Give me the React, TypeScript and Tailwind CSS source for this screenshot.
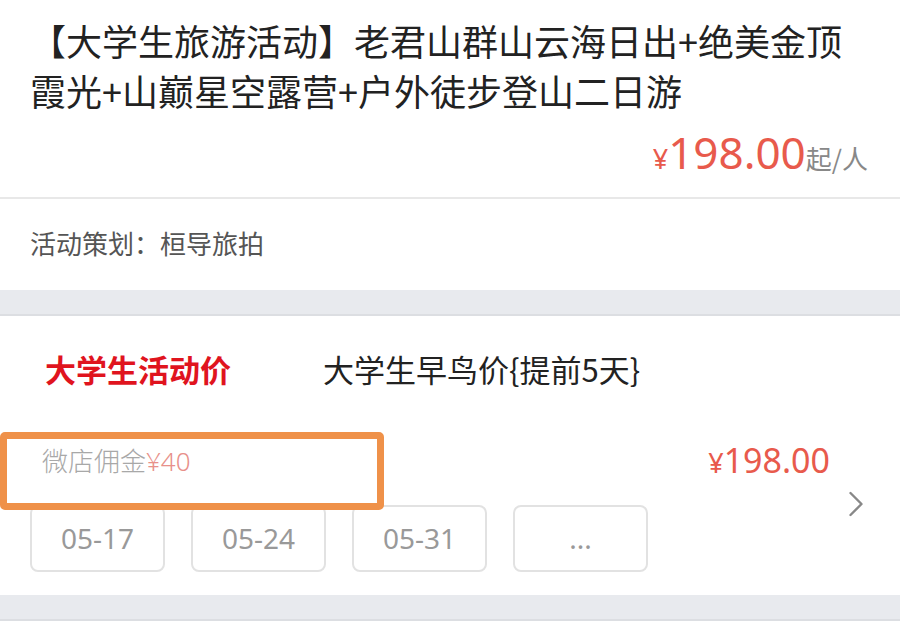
import { ChevronRight } from "lucide-react";

const dates = ["05-17", "05-24", "05-31", "..."];

export default function App() {
    return (
        <div className="w-[900px] h-[644px] bg-white overflow-hidden font-['Noto_Sans','Noto_Sans_CJK_SC',sans-serif]">
            {/* Title block */}
            <section className="h-[197px] px-[30px] pt-[15px] flex flex-col">
                <h1 className="text-[36px] leading-[50px] text-[#222] font-normal font-['Noto_Sans_CJK_SC',sans-serif]">
                    【大学生旅游活动】老君山群山云海日出+绝美金顶霞光+山巅星空露营+户外徒步登山二日游
                </h1>
                <div className="flex justify-end items-baseline mt-[12px] pr-[2px] text-[#e85a4c]">
                    <span className="text-[27px]">¥</span>
                    <span className="text-[44px] leading-[50px]">198.00</span>
                    <span className="text-[26px] text-[#888] font-['Noto_Sans_CJK_SC',sans-serif]">起/人</span>
                </div>
            </section>
            <div className="h-[2px] bg-[#e8e8e8]" />

            {/* Planner */}
            <section className="h-[91px] px-[30px] flex items-center">
                <p className="text-[26px] text-[#555] font-['Noto_Sans_CJK_SC',sans-serif] -mt-[4px]">活动策划：桓导旅拍</p>
            </section>
            <div className="h-[26px] bg-[#e8eaee] border-b-[2px] border-[#dcdee2]" />

            {/* Price options */}
            <section className="relative h-[279px] pt-[30px] pl-[30px] pr-[70px]">
                <div className="flex items-center gap-[92px] pl-[15px] font-['Noto_Sans_CJK_SC',sans-serif]">
                    <span className="text-[31px] font-bold text-[#e0141e]">大学生活动价</span>
                    <span className="text-[31px] text-[#222]">大学生早鸟价{"{"}提前5天{"}"}</span>
                </div>

                <div className="flex justify-between items-center mt-[42px] pl-[12px]">
                    <span className="text-[26px] text-[#a8a8a8] font-light">
                        <span className="font-['Noto_Sans_CJK_SC',sans-serif]">微店佣金</span>
                        <span className="text-[#e8908a]">¥40</span>
                    </span>
                    <span className="text-[#e85a4c] flex items-baseline">
                        <span className="text-[27px]">¥</span>
                        <span className="text-[34px]">198.00</span>
                    </span>
                </div>

                <div className="flex gap-[26px] mt-[19px]">
                    {dates.map(d => (
                        <div key={d}
                            className="w-[135px] h-[67px] rounded-[8px] border-[2px] border-[#e2e2e2] flex items-center justify-center text-[28px] text-[#999]">
                            {d}
                        </div>
                    ))}
                </div>

                <ChevronRight size={44} strokeWidth={1.3} className="absolute right-[22px] top-[166px] text-[#888]" />

                {/* Highlight annotation */}
                <div className="absolute left-0 top-[116px] w-[384px] h-[78px] border-[7px] border-[#ef9149] rounded-[5px] pointer-events-none" />
            </section>
            <div className="h-[26px] bg-[#e8eaee] border-b-[2px] border-[#dcdee2]" />
        </div>
    );
}
